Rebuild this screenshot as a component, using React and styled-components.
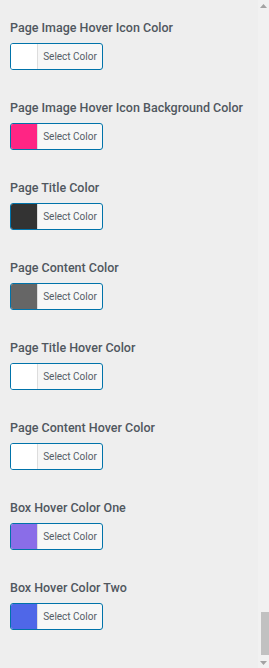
import React from "react";
import styled, { createGlobalStyle } from "styled-components";

const Global = createGlobalStyle`
  html, body { margin: 0; padding: 0; background: #eeeeee; }
  body { font-family: Roboto, "Liberation Sans", Arial, sans-serif; }
  * { box-sizing: border-box; }
`;

const Frame = styled.div`
  display: flex;
  width: 269px;
  height: 668px;
  overflow: hidden;
  background: #eeeeee;
`;

const Main = styled.div`
  flex: 1;
  display: flex;
  flex-direction: column;
  padding: 18px 0 0 10px;
  gap: 28px;
`;

const Field = styled.div`
  display: flex;
  flex-direction: column;
  align-items: flex-start;
  gap: 5px;
`;

const Label = styled.div`
  font-size: 12.5px;
  line-height: 20px;
  font-weight: 500;
  color: #50575e;
  white-space: nowrap;
`;

const ColorButton = styled.button`
  display: flex;
  align-items: stretch;
  width: 93px;
  height: 27px;
  padding: 0;
  border: 1px solid #0073aa;
  border-radius: 3px;
  background: #f7f7f7;
  overflow: hidden;
  cursor: pointer;
`;

const Swatch = styled.span`
  width: 27px;
  flex: none;
  background: ${(p) => p.$color};
  border-right: 1px solid #dddddd;
`;

const ButtonText = styled.span`
  flex: 1;
  display: flex;
  align-items: center;
  justify-content: center;
  font-family: Roboto, "Liberation Sans", Arial, sans-serif;
  font-size: 10px;
  color: #555d66;
`;

const Track = styled.div`
  width: 11px;
  flex: none;
  display: flex;
  flex-direction: column;
  align-items: flex-end;
  background: #f1f1f1;
`;

const Arrow = styled.div`
  width: 11px;
  height: 11px;
  display: flex;
  align-items: center;
  justify-content: center;
`;

const Spacer = styled.div`
  flex: 1;
`;

const Thumb = styled.div`
  width: 8px;
  height: 43px;
  background: #c1c1c1;
  margin-bottom: 2px;
`;

const items = [
  ["Page Image Hover Icon Color", "#ffffff"],
  ["Page Image Hover Icon Background Color", "#ff2584"],
  ["Page Title Color", "#333333"],
  ["Page Content Color", "#666666"],
  ["Page Title Hover Color", "#ffffff"],
  ["Page Content Hover Color", "#ffffff"],
  ["Box Hover Color One", "#8a6de8"],
  ["Box Hover Color Two", "#4f67e8"],
];

export default function App() {
  return (
    <>
      <Global />
      <Frame>
        <Main>
          {items.map(([label, color]) => (
            <Field key={label}>
              <Label>{label}</Label>
              <ColorButton type="button">
                <Swatch $color={color} />
                <ButtonText>Select Color</ButtonText>
              </ColorButton>
            </Field>
          ))}
        </Main>
        <Track>
          <Arrow>
            <svg width="7" height="4" viewBox="0 0 7 4">
              <path d="M0 4 L3.5 0 L7 4 Z" fill="#a3a3a3" />
            </svg>
          </Arrow>
          <Spacer />
          <Thumb />
          <Arrow>
            <svg width="7" height="4" viewBox="0 0 7 4">
              <path d="M0 0 L3.5 4 L7 0 Z" fill="#a3a3a3" />
            </svg>
          </Arrow>
        </Track>
      </Frame>
    </>
  );
}
